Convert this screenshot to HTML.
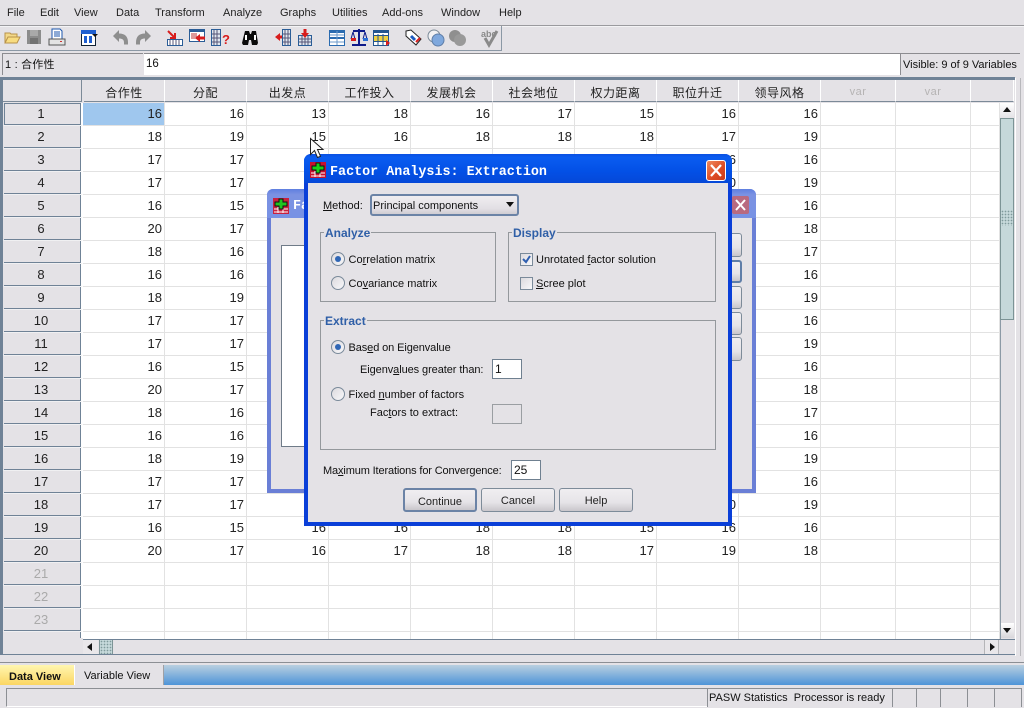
<!DOCTYPE html>
<html><head><meta charset="utf-8"><style>
html,body{margin:0;padding:0}
body{width:1024px;height:708px;position:relative;overflow:hidden;background:#e4e2e6;font:11px "Liberation Sans","Noto Sans CJK SC",sans-serif;color:#111}
.a{position:absolute;box-sizing:border-box}
.t{position:absolute;height:14px;line-height:14px;white-space:nowrap}
.m{position:absolute;top:6px;height:14px;line-height:14px;color:#222}
.hd{position:absolute;top:80px;height:22px;background:#e4e2e6;border-right:1px solid #fff;border-bottom:1px solid #7c8a98;text-align:center;line-height:27px;font-size:12px;letter-spacing:.5px;box-sizing:border-box;color:#222;font-family:"Liberation Sans","Noto Sans CJK SC",sans-serif}
.hd.var{color:#b5b3b3;font-size:11px;line-height:25px}
table{border-collapse:separate;border-spacing:0;table-layout:fixed;position:absolute;left:3px;top:0;width:997px;background:#fff}
tr{height:23px}
td{height:23px;box-sizing:border-box;padding:0 2px 0 0;border-right:1px solid #e2e2e2;border-bottom:1px solid #e2e2e2;text-align:right;font-size:13px;line-height:22px;overflow:hidden;color:#222}
td.h{background:#e4e2e6;background-clip:padding-box;text-align:center;border-right:2px solid #fff;border-bottom:1px solid #f0f0f2;padding:0 3px 0 0;border-left:1px solid #e4e2e6;box-shadow:inset -1px -1px 0 #6f8296}
td.s{box-shadow:inset 0 0 0 1px #6f8296}
td.g{color:#aaa}
.btn{position:absolute;height:24px;border:1px solid #7d8b99;border-radius:3px;background:linear-gradient(#f0eef1,#e6e4e8 60%,#c9c6cb);text-align:center;line-height:24px;box-sizing:border-box;color:#222}
.grp{position:absolute;border:1px solid #94989c;box-sizing:border-box}
.lg{position:absolute;font-size:12px;font-weight:bold;color:#2f5fa7;background:#e4e2e6;height:14px;line-height:14px;padding:0 1px}
.in{position:absolute;background:#fff;border:1px solid #6f8090;box-sizing:border-box;line-height:18px;padding-left:2px;height:20px;font-size:12px}
.r{position:absolute;width:14px;height:14px;border-radius:50%;border:1px solid #7a8a9a;background:linear-gradient(135deg,#dcdade,#f8f8fa);box-sizing:border-box}
.r i{position:absolute;left:3px;top:3px;width:6px;height:6px;border-radius:50%;background:#2f66b5}
.c{position:absolute;width:13px;height:13px;border:1px solid #7a8a9a;background:linear-gradient(135deg,#dcdade,#f8f8fa);box-sizing:border-box}
u{text-decoration:underline}
.dots{background-color:#c5d8da;background-image:radial-gradient(#7f9a9c 35%,transparent 40%);background-size:3px 3px}
</style></head><body>

<!-- menu -->
<div class="m" style="left:7px">File</div><div class="m" style="left:40px">Edit</div><div class="m" style="left:74px">View</div><div class="m" style="left:116px">Data</div><div class="m" style="left:155px">Transform</div><div class="m" style="left:223px">Analyze</div><div class="m" style="left:280px">Graphs</div><div class="m" style="left:332px">Utilities</div><div class="m" style="left:382px">Add-ons</div><div class="m" style="left:441px">Window</div><div class="m" style="left:499px">Help</div>
<div class="a" style="left:0;top:25px;width:1024px;height:1px;background:#9a9a9e"></div>
<div class="a" style="left:0;top:26px;width:1024px;height:1px;background:#f3f3f5"></div>

<!-- toolbar -->
<div class="a" style="left:501px;top:26px;width:1px;height:25px;background:#8b98a5"></div>
<div class="a" style="left:0;top:50px;width:502px;height:1px;background:#8b98a5"></div>
<svg class="a" style="left:0;top:26px" width="502" height="24" viewBox="0 0 502 24">
<path d="M5 17V7h5l1 1h6v3" fill="#f3d98a" stroke="#b8924a"/><path d="M5 17l3-6h12l-3 6z" fill="#f8dc80" stroke="#b8924a"/>
<rect x="27" y="4" width="14" height="14" fill="#8c8c8c"/><rect x="30" y="4" width="8" height="6" fill="#a9a9a9"/><rect x="30" y="12" width="8" height="6" fill="#727272"/>
<path d="M52 3h8l2 2v8H52z" fill="#fff" stroke="#1b56ad"/><path d="M54 6h6M54 8h6M54 10h6" stroke="#1b56ad"/><rect x="49" y="13" width="16" height="6" fill="#e3e3e3" stroke="#555"/><rect x="60" y="15" width="2" height="1" fill="#c33"/>
<rect x="81.500" y="4.500" width="14" height="15" fill="#fff" stroke="#123"/><rect x="81" y="4" width="15" height="4" fill="#1f5fd0"/><rect x="84" y="10" width="3" height="7" fill="#1f5fd0"/><rect x="89" y="10" width="3" height="7" fill="#1f5fd0"/><path d="M92 8h6l-3 3z" fill="#111"/>
<path d="M113 10l6-6v3.500c6 0 9 3 9 9v2h-4v-2c0-3-2-4-5-4V16z" fill="#8e8e8e"/>
<path d="M151 10l-6-6v3.500c-6 0-9 3-9 9v2h4v-2c0-3 2-4 5-4V16z" fill="#8e8e8e"/>
<path d="M168 5l7 7m0-5v5h-5" stroke="#d81c1c" stroke-width="2" fill="none"/><rect x="167.500" y="13.500" width="15" height="6" fill="#fff" stroke="#2a5d97"/><path d="M170 14v5M173 14v5M176 14v5M179 14v5" stroke="#557"/>
<rect x="189.500" y="3.500" width="15" height="12" fill="#fff" stroke="#2a5d97"/><rect x="189" y="3" width="16" height="3" fill="#2a5d97"/><path d="M191 8h6M191 10h6M191 12h6" stroke="#b33"/><path d="M195 12l5-4v2.500h5v3h-5V16z" fill="#d81c1c"/>
<rect x="211.500" y="3.500" width="9" height="16" fill="#dfe6ef" stroke="#2a5d97"/><path d="M214 4v15M217 4v15M212 8h8M212 12h8M212 16h8" stroke="#557"/><text x="222" y="18" font-family="Liberation Sans" font-weight="bold" font-size="13" fill="#d81c1c">?</text>
<path d="M245 5h4l1 3h1l1-3h4l2 12-1 2h-5l-1-5h-2l-1 5h-5l-1-2z" fill="#0b0b0b"/><rect x="245" y="9" width="2" height="5" fill="#fff"/><rect x="254" y="9" width="2" height="5" fill="#fff"/>
<path d="M275 11l5-4v2.500h3v3h-3V15z" fill="#d81c1c"/><rect x="282.500" y="3.500" width="8" height="16" fill="#dfe6ef" stroke="#2a5d97"/><path d="M285 4v15M288 4v15M283 8h7M283 12h7M283 16h7" stroke="#557"/>
<rect x="298.500" y="9.500" width="13" height="10" fill="#dfe6ef" stroke="#2a5d97"/><path d="M302 10v9M305 10v9M308 10v9M299 13h12M299 16h12" stroke="#557"/><path d="M305 12l-4-5h2.500V3h3v4H309z" fill="#d81c1c"/>
<rect x="329.500" y="4.500" width="15" height="15" fill="#fff" stroke="#2a6bb0"/><rect x="329" y="4" width="16" height="3" fill="#2a6bb0"/><rect x="329" y="11" width="16" height="2" fill="#2a6bb0"/><path d="M330 9h14M330 16h14M337 5v14" stroke="#6b9acb"/>
<path d="M359 3v15M353 5h12M352 19h14" stroke="#0e1a8a" stroke-width="2" fill="none"/><path d="M353 6l-2 7M353 6l2 7M365 6l-2 7M365 6l2 7" stroke="#0e1a8a" fill="none"/><rect x="351" y="12" width="5" height="3" fill="#d81c1c"/><rect x="363" y="12" width="5" height="3" fill="#2b6fd6"/>
<rect x="373.500" y="4.500" width="15" height="15" fill="#fff" stroke="#24558f"/><rect x="373" y="4" width="16" height="3" fill="#24558f"/><rect x="374" y="10" width="14" height="5" fill="#f0d040"/><path d="M374 9.500h14M374 15.500h14M378 8v11M383 8v11" stroke="#24558f"/><path d="M386 14l4 3-4 3z" fill="#d81c1c"/>
<path d="M406 5l5-1 10 9-5 6-10-9z" fill="#fff" stroke="#222"/><path d="M411 10l4 4" stroke="#1d5bc0" stroke-width="3"/><path d="M416 16l4-4" stroke="#d81c1c" stroke-width="2"/>
<circle cx="434" cy="10" r="6" fill="#f2f2f4" stroke="#7b8a98"/><circle cx="438" cy="14" r="6" fill="#7fa8dd" stroke="#5f7ea8"/>
<circle cx="455" cy="10" r="6" fill="#8f8f8f"/><circle cx="460" cy="14" r="6" fill="#999"/>
<text x="481" y="11" font-family="Liberation Sans" font-weight="bold" font-size="9" fill="#8a8a8a">abc</text><path d="M485 12l4 7 8-14" stroke="#8a8a8a" stroke-width="3" fill="none"/>
</svg>

<!-- cell editor row -->
<div class="a" style="left:2px;top:53px;width:141px;height:22px;border-top:1px solid #8c8c90;border-left:1px solid #8c8c90;background:#e4e2e6"></div>
<div class="t" style="left:5px;top:58px;letter-spacing:.2px;font-size:11px">1 : 合作性</div>
<div class="a" style="left:144px;top:53px;width:756px;height:22px;background:#fff;border-top:1px solid #8c8c90"></div>
<div class="t" style="left:146px;top:57px;font-size:11.500px">16</div>
<div class="a" style="left:900px;top:53px;width:120px;height:22px;border-top:1px solid #8c8c90;border-left:1px solid #8c8c90"></div>
<div class="t" style="left:903px;top:58px;font-size:11px">Visible: 9 of 9 Variables</div>

<!-- grid frame -->
<div class="a" style="left:0;top:77px;width:1015px;height:3px;background:#6f8296"></div>
<div class="a" style="left:0;top:77px;width:3px;height:578px;background:#6f8296"></div>
<div class="a" style="left:1015px;top:78px;width:1px;height:578px;background:#fff"></div>
<div class="a" style="left:1020px;top:78px;width:1px;height:578px;background:#b8b8bc"></div>
<div class="a" style="left:3px;top:80px;width:79px;height:22px;background:#e4e2e6;border-right:1px solid #7c8a98;border-bottom:1px solid #7c8a98"></div>
<div class="hd" style="left:84px;width:81px">合作性</div>
<div class="hd" style="left:165px;width:82px">分配</div>
<div class="hd" style="left:247px;width:82px">出发点</div>
<div class="hd" style="left:329px;width:82px">工作投入</div>
<div class="hd" style="left:411px;width:82px">发展机会</div>
<div class="hd" style="left:493px;width:82px">社会地位</div>
<div class="hd" style="left:575px;width:82px">权力距离</div>
<div class="hd" style="left:657px;width:82px">职位升迁</div>
<div class="hd" style="left:739px;width:82px">领导风格</div>
<div class="hd var" style="left:821px;width:75px">var</div>
<div class="hd var" style="left:896px;width:75px">var</div>
<div class="hd" style="left:971px;width:43px"></div>

<!-- grid -->
<div class="a" style="left:0;top:103px;width:1000px;height:537px;overflow:hidden">
<table><colgroup><col style="width:80px"><col style="width:82px"><col style="width:82px"><col style="width:82px"><col style="width:82px"><col style="width:82px"><col style="width:82px"><col style="width:82px"><col style="width:82px"><col style="width:82px"><col style="width:75px"><col style="width:75px"><col style="width:29px"></colgroup>
<tr><td class="h s">1</td><td style="background:#9fc7ee">16</td><td>16</td><td>13</td><td>18</td><td>16</td><td>17</td><td>15</td><td>16</td><td>16</td><td></td><td></td><td></td></tr>
<tr><td class="h">2</td><td>18</td><td>19</td><td>15</td><td>16</td><td>18</td><td>18</td><td>18</td><td>17</td><td>19</td><td></td><td></td><td></td></tr>
<tr><td class="h">3</td><td>17</td><td>17</td><td>16</td><td>16</td><td>16</td><td>16</td><td>16</td><td>16</td><td>16</td><td></td><td></td><td></td></tr>
<tr><td class="h">4</td><td>17</td><td>17</td><td>16</td><td>16</td><td>16</td><td>16</td><td>16</td><td>20</td><td>19</td><td></td><td></td><td></td></tr>
<tr><td class="h">5</td><td>16</td><td>15</td><td>16</td><td>16</td><td>18</td><td>18</td><td>15</td><td>16</td><td>16</td><td></td><td></td><td></td></tr>
<tr><td class="h">6</td><td>20</td><td>17</td><td>16</td><td>17</td><td>18</td><td>18</td><td>17</td><td>19</td><td>18</td><td></td><td></td><td></td></tr>
<tr><td class="h">7</td><td>18</td><td>16</td><td>16</td><td>17</td><td>18</td><td>18</td><td>17</td><td>19</td><td>17</td><td></td><td></td><td></td></tr>
<tr><td class="h">8</td><td>16</td><td>16</td><td>13</td><td>18</td><td>16</td><td>17</td><td>15</td><td>16</td><td>16</td><td></td><td></td><td></td></tr>
<tr><td class="h">9</td><td>18</td><td>19</td><td>15</td><td>16</td><td>18</td><td>18</td><td>18</td><td>17</td><td>19</td><td></td><td></td><td></td></tr>
<tr><td class="h">10</td><td>17</td><td>17</td><td>16</td><td>16</td><td>16</td><td>16</td><td>16</td><td>16</td><td>16</td><td></td><td></td><td></td></tr>
<tr><td class="h">11</td><td>17</td><td>17</td><td>16</td><td>16</td><td>16</td><td>16</td><td>16</td><td>20</td><td>19</td><td></td><td></td><td></td></tr>
<tr><td class="h">12</td><td>16</td><td>15</td><td>16</td><td>16</td><td>18</td><td>18</td><td>15</td><td>16</td><td>16</td><td></td><td></td><td></td></tr>
<tr><td class="h">13</td><td>20</td><td>17</td><td>16</td><td>17</td><td>18</td><td>18</td><td>17</td><td>19</td><td>18</td><td></td><td></td><td></td></tr>
<tr><td class="h">14</td><td>18</td><td>16</td><td>16</td><td>17</td><td>18</td><td>18</td><td>17</td><td>19</td><td>17</td><td></td><td></td><td></td></tr>
<tr><td class="h">15</td><td>16</td><td>16</td><td>13</td><td>18</td><td>16</td><td>17</td><td>15</td><td>16</td><td>16</td><td></td><td></td><td></td></tr>
<tr><td class="h">16</td><td>18</td><td>19</td><td>15</td><td>16</td><td>18</td><td>18</td><td>18</td><td>17</td><td>19</td><td></td><td></td><td></td></tr>
<tr><td class="h">17</td><td>17</td><td>17</td><td>16</td><td>16</td><td>16</td><td>16</td><td>16</td><td>16</td><td>16</td><td></td><td></td><td></td></tr>
<tr><td class="h">18</td><td>17</td><td>17</td><td>16</td><td>16</td><td>16</td><td>16</td><td>16</td><td>20</td><td>19</td><td></td><td></td><td></td></tr>
<tr><td class="h">19</td><td>16</td><td>15</td><td>16</td><td>16</td><td>18</td><td>18</td><td>15</td><td>16</td><td>16</td><td></td><td></td><td></td></tr>
<tr><td class="h">20</td><td>20</td><td>17</td><td>16</td><td>17</td><td>18</td><td>18</td><td>17</td><td>19</td><td>18</td><td></td><td></td><td></td></tr>
<tr><td class="h g">21</td><td></td><td></td><td></td><td></td><td></td><td></td><td></td><td></td><td></td><td></td><td></td><td></td></tr>
<tr><td class="h g">22</td><td></td><td></td><td></td><td></td><td></td><td></td><td></td><td></td><td></td><td></td><td></td><td></td></tr>
<tr><td class="h g">23</td><td></td><td></td><td></td><td></td><td></td><td></td><td></td><td></td><td></td><td></td><td></td><td></td></tr>
<tr><td class="h g">24</td><td></td><td></td><td></td><td></td><td></td><td></td><td></td><td></td><td></td><td></td><td></td><td></td></tr>
</table></div>
<div class="a" style="left:3px;top:638px;width:80px;height:17px;background:#e4e2e6"></div>

<!-- vertical scrollbar -->
<div class="a" style="left:1000px;top:103px;width:15px;height:552px;background:#e4e2e6;border-left:1px solid #8c9aa6"></div>
<div class="a" style="left:1000px;top:103px;width:14px;height:15px;background:linear-gradient(#fff,#e4e2e6)"></div>
<svg class="a" style="left:1002px;top:106px" width="10" height="8"><path d="M1 6l4-5 4 5z" fill="#111"/></svg>
<div class="a" style="left:1000px;top:118px;width:14px;height:202px;background:#c5d8da;border:1px solid #7c9496"></div>
<div class="a dots" style="left:1001px;top:210px;width:12px;height:16px"></div>
<div class="a" style="left:1000px;top:623px;width:14px;height:15px;background:linear-gradient(#fff,#d8d6da);border-left:1px solid #8c9aa6"></div>
<svg class="a" style="left:1002px;top:627px" width="10" height="8"><path d="M1 1l4 5 4-5z" fill="#111"/></svg>

<!-- horizontal scrollbar -->
<div class="a" style="left:83px;top:640px;width:932px;height:14px;background:#e4e2e6"></div>
<div class="a" style="left:83px;top:639px;width:932px;height:1px;background:#6f8296"></div>
<div class="a" style="left:3px;top:654px;width:1012px;height:1px;background:#6f8296"></div>
<div class="a" style="left:83px;top:640px;width:15px;height:14px;background:#e9e7ea"></div>
<svg class="a" style="left:86px;top:642px" width="8" height="10"><path d="M6 1L1 5l5 4z" fill="#111"/></svg>
<div class="a dots" style="left:99px;top:640px;width:14px;height:14px;border-right:1px solid #7c9496;border-left:1px solid #7c9496"></div>
<div class="a" style="left:984px;top:640px;width:15px;height:14px;background:#e9e7ea;border-left:1px solid #b5b5b8;border-right:1px solid #b5b5b8"></div>
<svg class="a" style="left:988px;top:642px" width="8" height="10"><path d="M2 1l5 4-5 4z" fill="#111"/></svg>

<!-- tabs -->
<div class="a" style="left:0;top:662px;width:1024px;height:1px;background:#8c8f94"></div>
<div class="a" style="left:0;top:665px;width:1024px;height:20px;background:linear-gradient(#b9cfe0,#4e94d8)"></div>
<div class="a" style="left:0;top:665px;width:74px;height:20px;background:linear-gradient(#fff6b0,#fbd663)"></div>
<div class="a" style="left:74px;top:665px;width:90px;height:20px;background:#e4e2e6;border-left:1px solid #fff;border-right:1px solid #a0a0a4"></div>
<div class="t" style="left:9px;top:670px;font-weight:bold;font-size:11px;color:#111">Data View</div>
<div class="t" style="left:84px;top:669px;font-size:11px">Variable View</div>

<!-- status -->
<div class="a" style="left:0;top:685px;width:1024px;height:23px;background:#e4e2e6"></div>
<div class="a" style="left:6px;top:688px;width:701px;height:19px;border-top:1px solid #8c8f94;border-left:1px solid #8c8f94;border-bottom:1px solid #fff"></div>
<div class="a" style="left:707px;top:688px;width:186px;height:19px;border-top:1px solid #8c8f94;border-left:1px solid #8c8f94;border-right:1px solid #8c8f94"></div>
<div class="a" style="left:916px;top:688px;width:1px;height:19px;background:#8c8f94"></div>
<div class="a" style="left:940px;top:688px;width:1px;height:19px;background:#8c8f94"></div>
<div class="a" style="left:967px;top:688px;width:1px;height:19px;background:#8c8f94"></div>
<div class="a" style="left:994px;top:688px;width:1px;height:19px;background:#8c8f94"></div>
<div class="a" style="left:893px;top:688px;width:128px;height:1px;background:#8c8f94"></div>
<div class="a" style="left:1021px;top:688px;width:1px;height:19px;background:#8c8f94"></div>
<div class="t" style="left:709px;top:691px;font-size:11px">PASW Statistics&nbsp; Processor is ready</div>

<!-- back dialog -->
<div class="a" style="left:267px;top:189px;width:489px;height:304px;background:#e4e2e6;border:4px solid #6a7fd6;border-top:0;border-radius:6px 6px 0 0"></div>
<div class="a" style="left:267px;top:189px;width:489px;height:29px;background:linear-gradient(#5f7fe0,#7b92e2 20%,#7892e4);border-radius:6px 6px 0 0"></div>
<div class="a" style="left:267px;top:489px;width:489px;height:4px;background:#6a7fd6"></div>
<svg class="a" style="left:273px;top:198px" width="16" height="16"><rect width="16" height="16" fill="#c8213f"/><path d="M1 11h14M1 14h14M5 9v6M10 9v6" stroke="#fff"/><path d="M6 1h4v3h4v4h-4v3H6V8H2V4h4z" fill="#1fc41f" stroke="#111"/></svg>
<div class="t" style="left:293px;top:199px;color:#fff;font:bold 13.400px 'Liberation Mono',monospace">Fa</div>
<div class="a" style="left:732px;top:196px;width:17px;height:18px;background:#b86a80;border-radius:2px"></div>
<svg class="a" style="left:733px;top:198px" width="15" height="14"><path d="M3 2l9 10M12 2L3 12" stroke="#fff" stroke-width="2"/></svg>
<div class="a" style="left:281px;top:245px;width:30px;height:202px;background:#fff;border:1px solid #6f7b88"></div>
<div class="btn" style="left:720px;top:233px;width:22px;height:24px"></div>
<div class="btn" style="left:720px;top:260px;width:22px;height:23px;border-color:#5f7ea8;border-width:2px"></div>
<div class="btn" style="left:720px;top:286px;width:22px;height:23px"></div>
<div class="btn" style="left:720px;top:312px;width:22px;height:23px"></div>
<div class="btn" style="left:720px;top:337px;width:22px;height:24px"></div>

<!-- main dialog -->
<div class="a" style="left:304px;top:154px;width:428px;height:372px;background:#e4e2e6;border:4px solid #0a3fd8;border-top:0;border-radius:7px 7px 0 0"></div>
<div class="a" style="left:304px;top:154px;width:428px;height:29px;background:linear-gradient(#0a50e2,#0a5cf0 12%,#0350e6 60%,#0548d8);border-radius:7px 7px 0 0"></div>
<svg class="a" style="left:310px;top:162px" width="16" height="16"><rect width="16" height="16" fill="#c8102f"/><path d="M1 11h14M1 14h14M5 9v6M10 9v6" stroke="#fff"/><path d="M6 1h4v3h4v4h-4v3H6V8H2V4h4z" fill="#18d018" stroke="#111"/></svg>
<div class="t" style="left:330px;top:165px;color:#fff;font:bold 13.400px 'Liberation Mono',monospace">Factor Analysis: Extraction</div>
<div class="a" style="left:706px;top:160px;width:20px;height:21px;background:linear-gradient(135deg,#ef8a5e,#dd4a22 60%,#c93a1a);border:1px solid #fff;border-radius:3px"></div>
<svg class="a" style="left:708px;top:163px" width="16" height="15"><path d="M3 2l10 11M13 2L3 13" stroke="#fff" stroke-width="2.200"/></svg>

<div class="t" style="left:323px;top:199px"><u>M</u>ethod:</div>
<div class="a" style="left:370px;top:194px;width:149px;height:22px;border:2px solid #6b83a6;border-radius:3px;background:linear-gradient(#f0eef1,#e2dfe4 70%,#cfccd2)"></div>
<div class="t" style="left:373px;top:199px">Principal components</div>
<svg class="a" style="left:505px;top:201px" width="10" height="7"><path d="M1 1h8L5 6z" fill="#111"/></svg>

<div class="grp" style="left:320px;top:232px;width:176px;height:70px"></div>
<div class="lg" style="left:324px;top:226px">Analyze</div>
<div class="r" style="left:331px;top:252px"><i></i></div>
<div class="t" style="left:348.500px;top:253px">Co<u>r</u>relation matrix</div>
<div class="r" style="left:331px;top:276px"></div>
<div class="t" style="left:348.500px;top:277px">Co<u>v</u>ariance matrix</div>

<div class="grp" style="left:508px;top:232px;width:208px;height:70px"></div>
<div class="lg" style="left:512px;top:226px">Display</div>
<div class="c" style="left:520px;top:253px"></div>
<svg class="a" style="left:521px;top:254px" width="11" height="11"><path d="M2 5l3 3 4-6" stroke="#2f5fb0" stroke-width="2" fill="none"/></svg>
<div class="t" style="left:536px;top:253px">Unrotated <u>f</u>actor solution</div>
<div class="c" style="left:520px;top:277px"></div>
<div class="t" style="left:536px;top:277px"><u>S</u>cree plot</div>

<div class="grp" style="left:320px;top:320px;width:396px;height:130px"></div>
<div class="lg" style="left:324px;top:314px">Extract</div>
<div class="r" style="left:331px;top:340px"><i></i></div>
<div class="t" style="left:348.500px;top:341px;letter-spacing:-.1px">Bas<u>e</u>d on Eigenvalue</div>
<div class="t" style="left:360px;top:363px;letter-spacing:-.08px">Eigenv<u>a</u>lues <u>g</u>reater than:</div>
<div class="in" style="left:492px;top:359px;width:30px">1</div>
<div class="r" style="left:331px;top:387px"></div>
<div class="t" style="left:348.500px;top:388px">Fixed <u>n</u>umber of factors</div>
<div class="t" style="left:370px;top:406px">Fac<u>t</u>ors to extract:</div>
<div class="in" style="left:492px;top:404px;width:30px;background:#e4e2e6;border-color:#9a9ea2"></div>
<div class="t" style="left:323px;top:464px;letter-spacing:-.14px">Ma<u>x</u>imum Iterations for Convergence:</div>
<div class="in" style="left:511px;top:460px;width:30px">25</div>
<div class="btn" style="left:403px;top:488px;width:74px;border:2px solid #6b83a6">Continue</div>
<div class="btn" style="left:481px;top:488px;width:74px">Cancel</div>
<div class="btn" style="left:559px;top:488px;width:74px">Help</div>

<!-- cursor -->
<svg class="a" style="left:309px;top:137px" width="16" height="23"><path d="M1.500 1.500v16l4-4 3 7 3-1.200-3-6.800h5.500z" fill="#fff" stroke="#222"/></svg>
</body></html>
